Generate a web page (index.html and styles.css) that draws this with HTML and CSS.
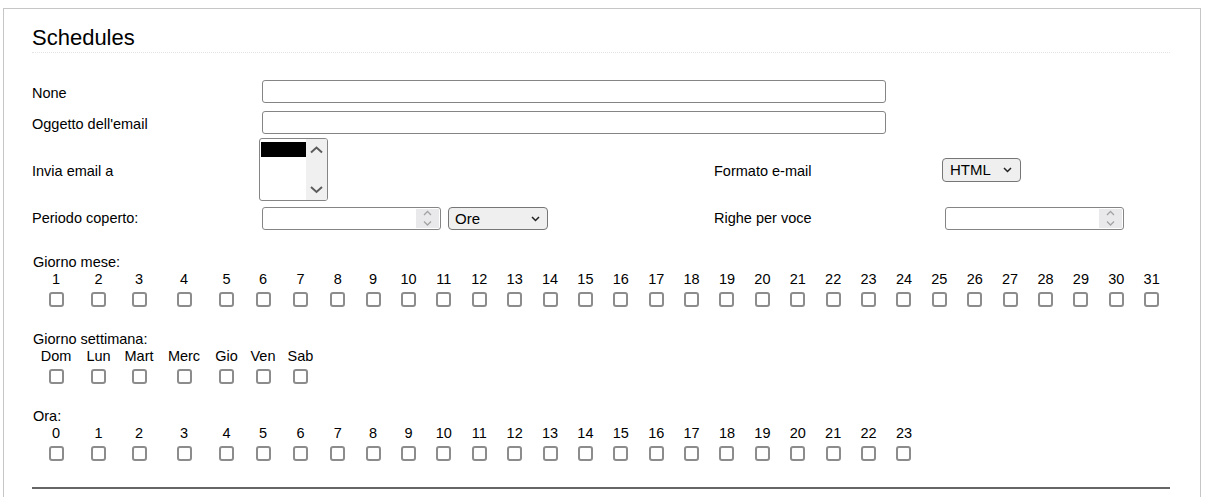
FILE: index.html
```html
<!DOCTYPE html>
<html lang="it">
<head>
<meta charset="utf-8">
<title>Schedules</title>
<link rel="stylesheet" href="styles.css">
</head>
<body>
<div class="panel">
  <h2 class="title">Schedules</h2>

  <div class="form">
    <div class="frow">
      <label class="lbl">None</label>
      <input class="text wide" type="text">
    </div>
    <div class="frow r2">
      <label class="lbl">Oggetto dell'email</label>
      <input class="text wide" type="text">
    </div>
    <div class="frow r3">
      <label class="lbl">Invia email a</label>
      <div class="listbox">
        <div class="options"><div class="opt"></div></div>
        <div class="lb-scroll">
          <svg width="21" height="61" viewBox="0 0 21 61"><path d="M5 13.5L10.5 8.5L16 13.5" fill="none" stroke="#5c5c5c" stroke-width="2"/><path d="M5 48L10.5 53L16 48" fill="none" stroke="#5c5c5c" stroke-width="2"/></svg>
        </div>
      </div>
      <label class="lbl">Formato e-mail</label>
      <div class="select sel-html"><span>HTML</span><svg width="9" height="6" viewBox="0 0 9 6"><path d="M1 1L4.5 4.5L8 1" fill="none" stroke="#222" stroke-width="1.5"/></svg></div>
    </div>
    <div class="frow r4">
      <label class="lbl">Periodo coperto:</label>
      <div class="pair">
        <div class="number">
          <div class="spin"><svg width="23" height="19" viewBox="0 0 23 19"><path d="M8 6L11.5 2.5L15 6" fill="none" stroke="#a3a3a3" stroke-width="1.3"/><path d="M8 12.5L11.5 16L15 12.5" fill="none" stroke="#a3a3a3" stroke-width="1.3"/></svg></div>
        </div>
        <div class="select sel-ore"><span>Ore</span><svg width="9" height="6" viewBox="0 0 9 6"><path d="M1 1L4.5 4.5L8 1" fill="none" stroke="#222" stroke-width="1.5"/></svg></div>
      </div>
      <label class="lbl">Righe per voce</label>
      <div class="number n2">
        <div class="spin"><svg width="23" height="19" viewBox="0 0 23 19"><path d="M8 6L11.5 2.5L15 6" fill="none" stroke="#a3a3a3" stroke-width="1.3"/><path d="M8 12.5L11.5 16L15 12.5" fill="none" stroke="#a3a3a3" stroke-width="1.3"/></svg></div>
      </div>
    </div>
  </div>

  <div class="sched">
    <div class="glabel">Giorno mese:</div>
    <div class="cell">1<input class="cb" type="checkbox"></div>
    <div class="cell">2<input class="cb" type="checkbox"></div>
    <div class="cell">3<input class="cb" type="checkbox"></div>
    <div class="cell">4<input class="cb" type="checkbox"></div>
    <div class="cell">5<input class="cb" type="checkbox"></div>
    <div class="cell">6<input class="cb" type="checkbox"></div>
    <div class="cell">7<input class="cb" type="checkbox"></div>
    <div class="cell">8<input class="cb" type="checkbox"></div>
    <div class="cell">9<input class="cb" type="checkbox"></div>
    <div class="cell">10<input class="cb" type="checkbox"></div>
    <div class="cell">11<input class="cb" type="checkbox"></div>
    <div class="cell">12<input class="cb" type="checkbox"></div>
    <div class="cell">13<input class="cb" type="checkbox"></div>
    <div class="cell">14<input class="cb" type="checkbox"></div>
    <div class="cell">15<input class="cb" type="checkbox"></div>
    <div class="cell">16<input class="cb" type="checkbox"></div>
    <div class="cell">17<input class="cb" type="checkbox"></div>
    <div class="cell">18<input class="cb" type="checkbox"></div>
    <div class="cell">19<input class="cb" type="checkbox"></div>
    <div class="cell">20<input class="cb" type="checkbox"></div>
    <div class="cell">21<input class="cb" type="checkbox"></div>
    <div class="cell">22<input class="cb" type="checkbox"></div>
    <div class="cell">23<input class="cb" type="checkbox"></div>
    <div class="cell">24<input class="cb" type="checkbox"></div>
    <div class="cell">25<input class="cb" type="checkbox"></div>
    <div class="cell">26<input class="cb" type="checkbox"></div>
    <div class="cell">27<input class="cb" type="checkbox"></div>
    <div class="cell">28<input class="cb" type="checkbox"></div>
    <div class="cell">29<input class="cb" type="checkbox"></div>
    <div class="cell">30<input class="cb" type="checkbox"></div>
    <div class="cell">31<input class="cb" type="checkbox"></div>

    <div class="glabel gap">Giorno settimana:</div>
    <div class="cell">Dom<input class="cb" type="checkbox"></div>
    <div class="cell">Lun<input class="cb" type="checkbox"></div>
    <div class="cell">Mart<input class="cb" type="checkbox"></div>
    <div class="cell">Merc<input class="cb" type="checkbox"></div>
    <div class="cell">Gio<input class="cb" type="checkbox"></div>
    <div class="cell">Ven<input class="cb" type="checkbox"></div>
    <div class="cell">Sab<input class="cb" type="checkbox"></div>

    <div class="glabel gap">Ora:</div>
    <div class="cell">0<input class="cb" type="checkbox"></div>
    <div class="cell">1<input class="cb" type="checkbox"></div>
    <div class="cell">2<input class="cb" type="checkbox"></div>
    <div class="cell">3<input class="cb" type="checkbox"></div>
    <div class="cell">4<input class="cb" type="checkbox"></div>
    <div class="cell">5<input class="cb" type="checkbox"></div>
    <div class="cell">6<input class="cb" type="checkbox"></div>
    <div class="cell">7<input class="cb" type="checkbox"></div>
    <div class="cell">8<input class="cb" type="checkbox"></div>
    <div class="cell">9<input class="cb" type="checkbox"></div>
    <div class="cell">10<input class="cb" type="checkbox"></div>
    <div class="cell">11<input class="cb" type="checkbox"></div>
    <div class="cell">12<input class="cb" type="checkbox"></div>
    <div class="cell">13<input class="cb" type="checkbox"></div>
    <div class="cell">14<input class="cb" type="checkbox"></div>
    <div class="cell">15<input class="cb" type="checkbox"></div>
    <div class="cell">16<input class="cb" type="checkbox"></div>
    <div class="cell">17<input class="cb" type="checkbox"></div>
    <div class="cell">18<input class="cb" type="checkbox"></div>
    <div class="cell">19<input class="cb" type="checkbox"></div>
    <div class="cell">20<input class="cb" type="checkbox"></div>
    <div class="cell">21<input class="cb" type="checkbox"></div>
    <div class="cell">22<input class="cb" type="checkbox"></div>
    <div class="cell">23<input class="cb" type="checkbox"></div>
  </div>

  <div class="rule"></div>
</div>
</body>
</html>
```

FILE: styles.css
```css
* {
  box-sizing: border-box;
}

html,
body {
  overflow: hidden;
}

body {
  margin: 0;
  background: #fff;
  color: #000;
  font-family: "Liberation Sans", Arial, sans-serif;
  font-size: 14.5px;
}

.panel {
  margin: 8px 7px 0 3px;
  height: 489px;
  border: 1px solid #c6c6c6;
  border-bottom: none;
  padding: 16px 30px 0 28px;
}

.title {
  margin: 0;
  padding-bottom: 1px;
  font-size: 22px;
  font-weight: normal;
  line-height: 26px;
  color: #000;
  border-bottom: 1px dotted #e4e4e4;
}

.form {
  margin-top: 27px;
}

.frow {
  display: grid;
  grid-template-columns: 230px 452px 228px 1fr;
  align-items: center;
}

.r2 {
  margin-top: 8px;
}

.r3 {
  margin-top: 4px;
}

.r4 {
  margin-top: 6px;
}

.lbl {
  padding-top: 4px;
  line-height: 17px;
}

.r4 .lbl {
  padding-top: 0;
}

.text {
  height: 23px;
  margin: 0;
  padding: 0 4px;
  border: 1px solid #858585;
  border-radius: 3px;
  font: inherit;
  background: #fff;
}

.wide {
  grid-column: 2 / 4;
  width: 624px;
}

.listbox {
  display: flex;
  width: 69px;
  height: 63px;
  margin-left: -3px;
  border: 1px solid #858585;
  border-radius: 3px;
  overflow: hidden;
  background: #fff;
}

.options {
  width: 46px;
  padding: 3px 0 0 1px;
}

.opt {
  width: 45px;
  height: 15px;
  background: #000;
}

.lb-scroll {
  width: 21px;
  background: #f0f0f0;
  display: flex;
}

.pair {
  display: flex;
  align-items: center;
  gap: 7px;
}

.number {
  display: flex;
  justify-content: flex-end;
  width: 179px;
  height: 23px;
  padding: 1px;
  border: 1px solid #858585;
  border-radius: 3px;
  background: #fff;
}

.n2 {
  margin-left: 3px;
}

.spin {
  display: flex;
  width: 23px;
  background: #e9e9ec;
}

.select {
  display: flex;
  align-items: center;
  justify-content: space-between;
  height: 23px;
  padding: 0 8px 0 7px;
  border: 1px solid #767676;
  border-radius: 4px;
  background: #efefef;
  font-size: 15px;
  color: #000;
}

.sel-html {
  width: 79px;
  height: 24px;
}

.sel-ore {
  width: 100px;
  padding: 0 7px 0 6px;
}

.sched {
  display: grid;
  grid-template-columns: 46px 39px 42px 48px 37px 36px 39px repeat(24, 35.4px);
  margin: 24px 0 0 1px;
}

.glabel {
  grid-column: 1 / -1;
  line-height: 17px;
}

.gap {
  margin-top: 24px;
}

.cell {
  display: flex;
  flex-direction: column;
  align-items: center;
  line-height: 17px;
}

.cb {
  appearance: none;
  -webkit-appearance: none;
  width: 15px;
  height: 15px;
  margin: 4px 0 0;
  border: 2px solid #8c8c8c;
  border-radius: 3px;
  background: #fff;
}

.rule {
  margin-top: 26px;
  border-top: 2px solid #666;
}
```
